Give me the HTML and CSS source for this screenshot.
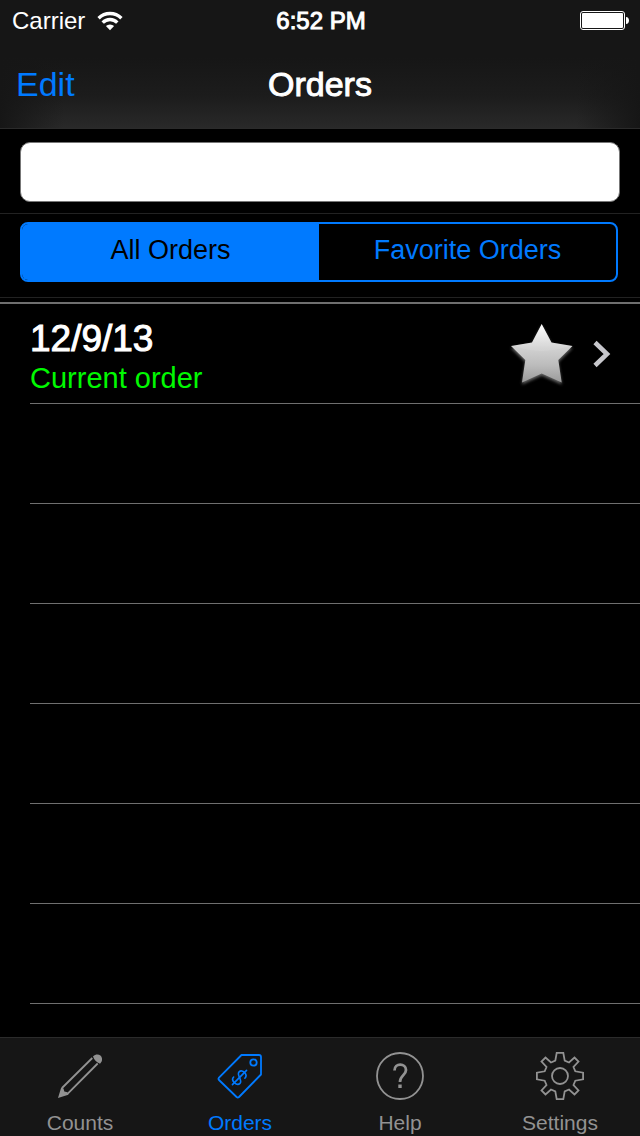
FILE: index.html
```html
<!DOCTYPE html>
<html lang="en">
<head>
    <meta charset="UTF-8">
    <meta name="viewport" content="width=device-width, initial-scale=1.0">
    <title>Orders</title>
    <link rel="stylesheet" href="styles.css">
</head>
<body>
    <header class="header">
        <div class="status-bar">
            <div class="carrier">
                <span>Carrier</span>
                <svg width="26" height="20" viewBox="0 0 26 20" fill="none" stroke="#fff" stroke-width="3.4">
                    <path d="M1.6 7.2a16.2 16.2 0 0 1 22.8 0"/>
                    <path d="M5.7 11.6a10.3 10.3 0 0 1 14.6 0"/>
                    <path d="M13 19.2l-4.1-4.1a5.8 5.8 0 0 1 8.2 0z" fill="#fff" stroke="none"/>
                </svg>
            </div>
            <span class="time">6:52 PM</span>
            <svg class="battery" width="50" height="20" viewBox="0 0 50 20">
                <rect x="0.5" y="0.5" width="44" height="18" rx="2.5" fill="none" stroke="#fff"/>
                <rect x="2" y="2" width="41" height="15" rx="1" fill="#fff"/>
                <path d="M46 6c4 0 4 7 0 7z" fill="#fff"/>
            </svg>
        </div>
        <div class="nav-bar">
            <button type="button" class="edit-btn">Edit</button>
            <h1>Orders</h1>
        </div>
    </header>

    <form class="search">
        <input type="search" class="search-input" aria-label="Search orders">
    </form>

    <div class="filter">
        <div class="segmented">
            <input type="radio" id="all" name="filter" checked>
            <label for="all">All Orders</label>
            <input type="radio" id="favorite" name="filter">
            <label for="favorite">Favorite Orders</label>
        </div>
    </div>

    <main class="orders">
        <ul class="order-list">
            <li class="order">
                <a href="#" class="order-link">
                    <span class="order-date">12/9/13</span>
                    <span class="order-status">Current order</span>
                </a>
                <button type="button" class="star-btn" aria-label="Favorite">
                    <svg width="70" height="70" viewBox="0 -1 70 70">
                        <defs>
                            <linearGradient id="starFill" x1="0" y1="0" x2="0" y2="1">
                                <stop offset="0" stop-color="#fff"/>
                                <stop offset="0.4" stop-color="#d2d2d2"/>
                                <stop offset="0.7" stop-color="#bcbcbc"/>
                                <stop offset="1" stop-color="#9a9a9a"/>
                            </linearGradient>
                            <filter id="starGlow" x="-20%" y="-20%" width="140%" height="140%">
                                <feGaussianBlur stdDeviation="1.6"/>
                            </filter>
                            <clipPath id="starClip">
                                <path d="M35.7 4l9.8 18.5 21 3.5-14.2 14 3.4 22.6-20-9.1L16 62.6 19.3 40 5 26l21-3.5z"/>
                            </clipPath>
                        </defs>
                        <path d="M35.7 6l9.8 18.5 21 3.5-14.2 14 3.4 22.6-20-9.1L16 64.6 19.3 42 5 28l21-3.5z" fill="#666" filter="url(#starGlow)"/>
                        <path d="M35.7 4l9.8 18.5 21 3.5-14.2 14 3.4 22.6-20-9.1L16 62.6 19.3 40 5 26l21-3.5z" fill="url(#starFill)"/>
                        <ellipse cx="35.7" cy="16" rx="36" ry="15" fill="#fff" opacity="0.1" clip-path="url(#starClip)"/>
                    </svg>
                </button>
                <svg class="chevron" width="20" height="30" viewBox="0 0 20 30" fill="none" stroke="#c7c7cc" stroke-width="4.6">
                    <path d="M3 3.500l12 11.500-12 11.500"/>
                </svg>
            </li>
            <li class="order"></li>
            <li class="order"></li>
            <li class="order"></li>
            <li class="order"></li>
            <li class="order"></li>
            <li class="order"></li>
        </ul>
    </main>

    <nav class="tab-bar">
        <a href="#" class="tab">
            <svg width="48" height="48" viewBox="0 0 48 48" fill="none" stroke="currentColor" stroke-width="1.8">
                <path d="M36.3 6L6 36M41.7 11.5L11 42.3"/>
                <path d="M5.2 35.5l2.3 1 .8 3 3.2.8.8 2.4L2 46z" fill="currentColor" stroke="none"/>
                <path d="M37 4.600c3.500-3.600 8.500-2 9 2 .3 2.200-.5 3.800-2 5.200-3.200-1.200-5.800-3.800-7-7.200z" fill="currentColor" stroke="none"/>
            </svg>
            <span>Counts</span>
        </a>
        <a href="#" class="tab active">
            <svg width="48" height="48" viewBox="0 0 48 48" fill="none" stroke="currentColor" stroke-width="1.8" stroke-linejoin="round" stroke-linecap="round">
                <path d="M25.500 3H43q2 0 2 2v17.500L23 45q-1.200 1-2.400 0L3 28q-1-1.200 0-2.400z"/>
                <circle cx="37.5" cy="10.500" r="3.2"/>
                <g transform="translate(23.500 25.500) rotate(45)" stroke-width="1.6">
                    <path d="M4.300-3.300c0-5-8.600-5-8.600-.4 0 4.400 8.800 3 8.800 7.500 0 4.600-9 4.600-9 0"/>
                    <path d="M0-10V10"/>
                </g>
            </svg>
            <span>Orders</span>
        </a>
        <a href="#" class="tab">
            <svg width="48" height="48" viewBox="0 0 48 48" fill="none" stroke="currentColor" stroke-width="1.8">
                <circle cx="24" cy="24" r="23"/>
                <path d="M18.500 18.500c0-8 11.500-7.500 11.500-.5 0 5-6 5.500-6 12" stroke-width="2.8"/>
                <path d="M22.300 32.500h3.400v3.500h-3.400z" fill="currentColor" stroke="none"/>
            </svg>
            <span>Help</span>
        </a>
        <a href="#" class="tab">
            <svg width="48" height="48" viewBox="-24 -24 48 48" fill="none" stroke="currentColor" stroke-width="1.8">
                <path d="M-3.300-23.100H3.300L4.700-15.300 9-13.500 14.500-18.500 18.500-14.500 13.500-9 15.300-4.700 23.100-3.300V3.300L15.300 4.700 13.500 9 18.500 14.500 14.500 18.500 9 13.500 4.700 15.300 3.300 23.100H-3.300L-4.700 15.300-9 13.500-14.500 18.500-18.500 14.500-13.500 9-15.300 4.700-23.100 3.300V-3.300L-15.300-4.700-13.500-9-18.500-14.500-14.500-18.500-9-13.500-4.700-15.300z"/>
                <circle r="8"/>
            </svg>
            <span>Settings</span>
        </a>
    </nav>
</body>
</html>
```
FILE: styles.css
```css
:root {
    --tint: #007aff;
    --bar: #161616;
    --bar-line: #2b2b2b;
    --separator: #6f6f6f;
}

* {
    box-sizing: border-box;
}

body {
    display: flex;
    flex-direction: column;
    min-height: 100vh;
    margin: 0;
    background-color: #000;
    color: #fff;
    font-family: "Helvetica Neue", "Liberation Sans", Arial, sans-serif;
}

button {
    padding: 0;
    border: none;
    background: none;
    font-family: inherit;
    cursor: pointer;
}

svg {
    display: block;
}

.header {
    background:
        linear-gradient(to right, var(--bar), transparent 10%, transparent 90%, var(--bar)),
        linear-gradient(var(--bar) 45%, #1c1c1c 75%, #292929);
    border-bottom: 1px solid var(--bar-line);
}

.status-bar,
.nav-bar {
    display: grid;
    grid-template-columns: 1fr auto 1fr;
    align-items: center;
}

.status-bar {
    height: 40px;
    padding: 2px 10px 0 12px;
    font-size: 24px;
}

.carrier {
    display: flex;
    align-items: center;
    gap: 12px;
}

.time,
h1,
.order-date {
    -webkit-text-stroke: 1px currentColor;
}

.battery {
    justify-self: end;
}

.nav-bar {
    height: 88px;
    padding: 0 16px;
}

.edit-btn {
    justify-self: start;
    color: var(--tint);
    font-size: 34px;
}

h1 {
    margin: 0;
    font-size: 34px;
    font-weight: normal;
}

.search {
    padding: 13px 20px 11px;
    border-bottom: 1px solid #222;
}

.search-input {
    display: block;
    width: 100%;
    height: 60px;
    padding: 0 16px;
    border: 1px solid #777;
    border-radius: 10px;
    background-color: #fff;
    color: #000;
    font-family: inherit;
    font-size: 27px;
    appearance: none;
}

.filter {
    padding: 8px 22px 15px 20px;
    border-bottom: 1px solid #222;
}

.segmented {
    display: grid;
    grid-template-columns: 1fr 1fr;
    height: 60px;
    border: 2px solid var(--tint);
    border-radius: 8px;
    overflow: hidden;
}

.segmented input {
    position: absolute;
    opacity: 0;
}

.segmented label {
    color: var(--tint);
    font-size: 27px;
    line-height: 52px;
    text-align: center;
    cursor: pointer;
}

.segmented input:checked + label {
    background-color: var(--tint);
    color: #000;
}

.orders {
    flex: 1;
    margin-top: 4px;
    border-top: 2px solid var(--separator);
}

.order-list {
    margin: 0;
    padding: 0 0 0 30px;
    list-style: none;
}

.order {
    display: flex;
    align-items: center;
    height: 100px;
    padding-right: 28px;
    border-bottom: 1px solid var(--separator);
}

.order-link {
    flex: 1;
    padding-top: 6px;
    color: inherit;
    text-decoration: none;
}

.order-date,
.order-status {
    display: block;
}

.order-date {
    font-size: 37px;
    line-height: 42px;
}

.order-status {
    color: #00f900;
    font-size: 29px;
    line-height: 36px;
}

.star-btn {
    margin-right: 16px;
}

.tab-bar {
    display: grid;
    grid-template-columns: repeat(4, 1fr);
    border-top: 1px solid var(--bar-line);
    background-color: var(--bar);
}

.tab {
    display: flex;
    flex-direction: column;
    align-items: center;
    gap: 10px;
    padding-top: 14px;
    color: #929292;
    font-size: 21px;
    line-height: 26px;
    text-decoration: none;
}

.tab.active {
    color: var(--tint);
}
```
